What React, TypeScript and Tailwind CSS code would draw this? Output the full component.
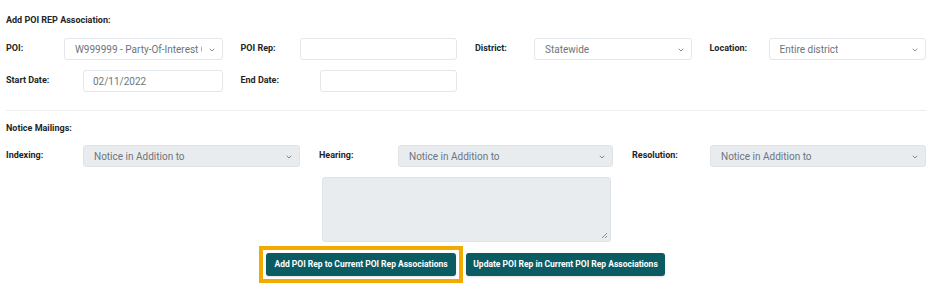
import { ChevronDown } from "lucide-react";

const labelCls = "text-[9px] font-bold text-[#212529] shrink-0";

const Select = ({ value, filled }: { value: string; filled?: boolean }) => (
  <div
    className={`relative flex-1 h-[22px] rounded-[3px] border flex items-center pl-[10px] pr-[20px] overflow-hidden ${
      filled ? "bg-[#e9ecef] border-[#dfe3e7]" : "bg-white border-[#e3e6ea]"
    }`}
  >
    <span className="text-[10px] text-[#6c757d] whitespace-nowrap overflow-hidden">{value}</span>
    <ChevronDown className="absolute right-[6px] top-[7px] w-[8px] h-[8px] text-[#5a6168]" strokeWidth={2.2} />
  </div>
);

const Input = ({ value }: { value?: string }) => (
  <div className="flex-1 h-[22px] rounded-[3px] border border-[#e3e6ea] bg-white flex items-center pl-[9px]">
    <span className="text-[10px] text-[#6c757d]">{value}</span>
  </div>
);

const Field = ({ label, labelW, children }: { label: string; labelW: string; children: React.ReactNode }) => (
  <div className="flex items-center">
    <div className={`${labelCls} ${labelW}`}>{label}</div>
    {children}
  </div>
);

export default function App() {
  return (
    <div className="w-[936px] h-[291px] bg-white px-[6px] pt-[14px] font-['Roboto',sans-serif]">
      <div className="text-[9px] font-bold text-[#212529] h-[12px] leading-[12px]">Add POI REP Association:</div>

      <div className="grid grid-cols-4 gap-x-[18px] mt-[12px] pr-[4px]">
        <Field label="POI:" labelW="w-[58px]">
          <Select value="W999999 - Party-Of-Interest Caption" />
        </Field>
        <Field label="POI Rep:" labelW="w-[59px]">
          <Input />
        </Field>
        <Field label="District:" labelW="w-[59px]">
          <Select value="Statewide" />
        </Field>
        <Field label="Location:" labelW="w-[59px]">
          <Select value="Entire district" />
        </Field>
      </div>

      <div className="grid grid-cols-4 gap-x-[18px] mt-[10px] pr-[4px]">
        <Field label="Start Date:" labelW="w-[77px]">
          <Input value="02/11/2022" />
        </Field>
        <Field label="End Date:" labelW="w-[79px]">
          <Input />
        </Field>
      </div>

      <div className="mt-[18px] border-t border-[#eeeeee] mr-[4px]" />

      <div className="text-[9px] font-bold text-[#212529] mt-[11px] h-[12px] leading-[12px]">Notice Mailings:</div>

      <div className="grid grid-cols-3 gap-x-[19px] mt-[11px] pr-[4px]">
        <Field label="Indexing:" labelW="w-[77px]">
          <Select value="Notice in Addition to" filled />
        </Field>
        <Field label="Hearing:" labelW="w-[79px]">
          <Select value="Notice in Addition to" filled />
        </Field>
        <Field label="Resolution:" labelW="w-[78px]">
          <Select value="Notice in Addition to" filled />
        </Field>
      </div>

      <div className="flex justify-center mt-[10px] pr-[4px]">
        <div className="relative w-[289px] h-[65px] rounded-[3px] border border-[#dfe3e7] bg-[#e9ecef]">
          <svg className="absolute right-[2px] bottom-[2px]" width="7" height="7" viewBox="0 0 7 7">
            <path d="M6 1L1 6M6 4L4 6" stroke="#8a8f94" strokeWidth="1" />
          </svg>
        </div>
      </div>

      <div className="flex justify-center items-center mt-[4px] pr-[12px]">
        <div className="border-[4px] border-[#f2a900] p-[3px]">
          <button className="block h-[23px] w-[190px] rounded-[3px] bg-[#0b5c62] text-white text-[8.5px] font-bold shadow-sm">
            Add POI Rep to Current POI Rep Associations
          </button>
        </div>
        <button className="ml-[3px] h-[23px] w-[199px] rounded-[3px] bg-[#0b5c62] text-white text-[8.5px] font-bold shadow-sm">
          Update POI Rep in Current POI Rep Associations
        </button>
      </div>
    </div>
  );
}
